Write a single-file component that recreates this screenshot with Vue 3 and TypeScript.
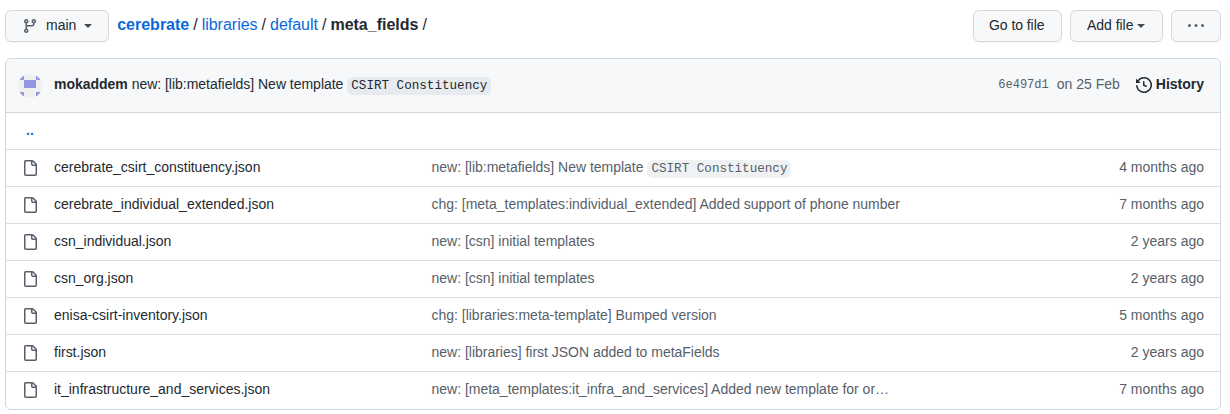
<script setup lang="ts">
interface FileRow {
  name: string
  message: string
  code?: string
  age: string
}

const crumbs: string[] = ['libraries', 'default']

const files: FileRow[] = [
  { name: 'cerebrate_csirt_constituency.json', message: 'new: [lib:metafields] New template', code: 'CSIRT Constituency', age: '4 months ago' },
  { name: 'cerebrate_individual_extended.json', message: 'chg: [meta_templates:individual_extended] Added support of phone number', age: '7 months ago' },
  { name: 'csn_individual.json', message: 'new: [csn] initial templates', age: '2 years ago' },
  { name: 'csn_org.json', message: 'new: [csn] initial templates', age: '2 years ago' },
  { name: 'enisa-csirt-inventory.json', message: 'chg: [libraries:meta-template] Bumped version', age: '5 months ago' },
  { name: 'first.json', message: 'new: [libraries] first JSON added to metaFields', age: '2 years ago' },
  { name: 'it_infrastructure_and_services.json', message: 'new: [meta_templates:it_infra_and_services] Added new template for or…', age: '7 months ago' },
]
</script>

<template>
  <main class="page">
    <header class="toolbar">
      <button class="btn branch" type="button">
        <svg class="icon" viewBox="0 0 16 16" width="16" height="16">
          <path fill-rule="evenodd" d="M11.75 2.5a.75.75 0 100 1.5.75.75 0 000-1.5zm-2.25.75a2.25 2.25 0 113 2.122V6A2.5 2.5 0 0110 8.5H6a1 1 0 00-1 1v1.128a2.251 2.251 0 11-1.5 0V5.372a2.25 2.25 0 111.5 0v1.836A2.492 2.492 0 016 7h4a1 1 0 001-1v-.628A2.25 2.25 0 019.5 3.25zM4.25 12a.75.75 0 100 1.5.75.75 0 000-1.5zM3.5 3.25a.75.75 0 111.5 0 .75.75 0 01-1.5 0z" />
        </svg>
        <span>main</span>
        <i class="caret"></i>
      </button>
      <nav class="crumbs">
        <a class="root" href="#">cerebrate</a>
        <template v-for="crumb in crumbs" :key="crumb">
          <span class="sep">/</span>
          <a href="#">{{ crumb }}</a>
        </template>
        <span class="sep">/</span>
        <strong>meta_fields</strong>
        <span class="sep">/</span>
      </nav>
      <div class="actions">
        <button class="btn goto" type="button">Go to file</button>
        <button class="btn add" type="button">Add file<i class="caret"></i></button>
        <button class="btn" type="button" aria-label="More options">
          <svg class="icon" viewBox="0 0 16 16" width="16" height="16">
            <path d="M8 9a1.5 1.5 0 100-3 1.5 1.5 0 000 3zM1.5 9a1.5 1.5 0 100-3 1.5 1.5 0 000 3zm13 0a1.5 1.5 0 100-3 1.5 1.5 0 000 3z" />
          </svg>
        </button>
      </div>
    </header>

    <section class="box">
      <div class="commit">
        <svg class="avatar" viewBox="0 0 24 24" width="24" height="24">
          <defs><clipPath id="avatar-clip"><circle cx="12" cy="12" r="12" /></clipPath></defs>
          <g clip-path="url(#avatar-clip)">
            <rect width="24" height="24" fill="#f0f0f0" />
            <path fill="#9295df" d="M2 2h4v4H2zM18 2h4v4h-4zM6 6h12v8H6zM2 18h4v4H2zM18 18h4v4h-4z" />
          </g>
        </svg>
        <p class="summary"><b>mokaddem</b> new: [lib:metafields] New template <code>CSIRT Constituency</code></p>
        <span class="sha">6e497d1</span>
        <span class="date">on 25 Feb</span>
        <a class="history" href="#">
          <svg viewBox="0 0 16 16" width="16" height="16">
            <path fill-rule="evenodd" d="M1.643 3.143L.427 1.927A.25.25 0 000 2.104V5.75c0 .138.112.25.25.25h3.646a.25.25 0 00.177-.427L2.715 4.215a6.5 6.5 0 11-1.18 4.458.75.75 0 10-1.493.154 8.001 8.001 0 101.6-5.684zM7.75 4a.75.75 0 01.75.75v2.992l2.028.812a.75.75 0 01-.557 1.392l-2.5-1A.75.75 0 017 8.25v-3.5A.75.75 0 017.75 4z" />
          </svg>
          <span>History</span>
        </a>
      </div>

      <div class="row parent"><a href="#">..</a></div>

      <div v-for="file in files" :key="file.name" class="row">
        <svg class="icon" viewBox="0 0 16 16" width="16" height="16">
          <path d="M2 1.75C2 .784 2.784 0 3.75 0h6.586c.464 0 .909.184 1.237.513l2.914 2.914c.329.328.513.773.513 1.237v9.586A1.75 1.75 0 0113.25 16h-9.5A1.75 1.75 0 012 14.25Zm1.75-.25a.25.25 0 00-.25.25v12.5c0 .138.112.25.25.25h9.5a.25.25 0 00.25-.25V6h-2.75A1.75 1.75 0 019 4.25V1.5Zm6.75.062V4.25c0 .138.112.25.25.25h2.688l-.011-.013-2.914-2.914-.013-.011Z" />
        </svg>
        <span class="name">{{ file.name }}</span>
        <span class="message">{{ file.message }}<template v-if="file.code">{{ ' ' }}<code>{{ file.code }}</code></template></span>
        <span class="age">{{ file.age }}</span>
      </div>
    </section>
  </main>
</template>

<style>
body {
  margin: 0;
  background: #fff;
}
</style>

<style scoped>
.page {
  box-sizing: border-box;
  width: 1230px;
  height: 414px;
  padding: 10px 9px 0 5px;
  overflow: hidden;
  color: #24292f;
  font: 14px/20px "Liberation Sans", Arial, sans-serif;
}

a {
  color: #0969da;
  text-decoration: none;
}

.toolbar {
  display: flex;
  align-items: flex-start;
  height: 32px;
  margin-bottom: 16px;
}

.btn {
  box-sizing: border-box;
  display: flex;
  align-items: center;
  height: 32px;
  padding: 0 16px 2px;
  border: 1px solid #d5d8da;
  border-radius: 6px;
  background: #f6f8fa;
  box-shadow: 0 1px 0 rgba(27, 31, 36, 0.04);
  color: #24292f;
  font: inherit;
  letter-spacing: -0.03px;
  white-space: nowrap;
}

.icon {
  flex: none;
  fill: #57606a;
}

.btn .icon {
  position: relative;
  top: 1px;
}

.branch span {
  margin-left: 8px;
}

.goto {
  width: 89px;
  padding: 0 0 2px 15px;
  letter-spacing: -0.06px;
}

.add {
  width: 93px;
}

.caret {
  width: 0;
  height: 0;
  margin: 2px 0 0 4px;
  border: 4px solid transparent;
  border-top-color: #424a53;
  border-bottom: 0;
}

.branch .caret {
  margin-left: 8px;
}

.crumbs {
  display: flex;
  gap: 4px;
  margin: 3px 0 0 8px;
  font-size: 16px;
  line-height: 24px;
  letter-spacing: -0.01px;
}

.root,
.crumbs strong {
  font-weight: 700;
}

.sep {
  color: #24292f;
}

.actions {
  display: flex;
  gap: 8px;
  margin-left: auto;
}

.box {
  box-sizing: border-box;
  height: 352px;
  border: 1px solid #d0d7de;
  border-radius: 6px;
  overflow: hidden;
}

.commit {
  box-sizing: border-box;
  display: flex;
  align-items: center;
  height: 54px;
  padding: 0 16px 3px 12px;
  border-bottom: 1px solid #d0d7de;
  background: #f6f8fa;
}

.avatar {
  margin-top: 4px;
}

.summary {
  flex: 1;
  margin: 0 0 0 12px;
  letter-spacing: -0.02px;
}

code {
  padding: 2px 4px;
  border-radius: 6px;
  background: rgba(175, 184, 193, 0.2);
  font: 12.6px/18px "Liberation Mono", monospace;
  letter-spacing: 0;
}

.sha {
  margin: 2px 8px 0 0;
  color: #57606a;
  font: 12px/20px "Liberation Mono", monospace;
}

.date {
  color: #57606a;
}

.history {
  display: flex;
  align-items: center;
  gap: 4px;
  margin-left: 16px;
  color: #24292f;
  font-weight: 700;
}

.history svg {
  margin-top: 2px;
  fill: #24292f;
}

.row {
  box-sizing: border-box;
  display: flex;
  align-items: center;
  height: 37px;
  padding: 0 16px 2px;
  border-top: 1px solid #d8dee4;
}

.row.parent {
  height: 36px;
  border-top: 0;
}

.parent a {
  padding-left: 4px;
  font-weight: 700;
}

.row .icon {
  margin-top: 2px;
}

.name {
  width: 377.5px;
  margin-left: 16px;
  letter-spacing: -0.01px;
}

.message {
  flex: 1;
  color: #57606a;
  letter-spacing: -0.012px;
  white-space: nowrap;
}

.age {
  color: #57606a;
}
</style>
